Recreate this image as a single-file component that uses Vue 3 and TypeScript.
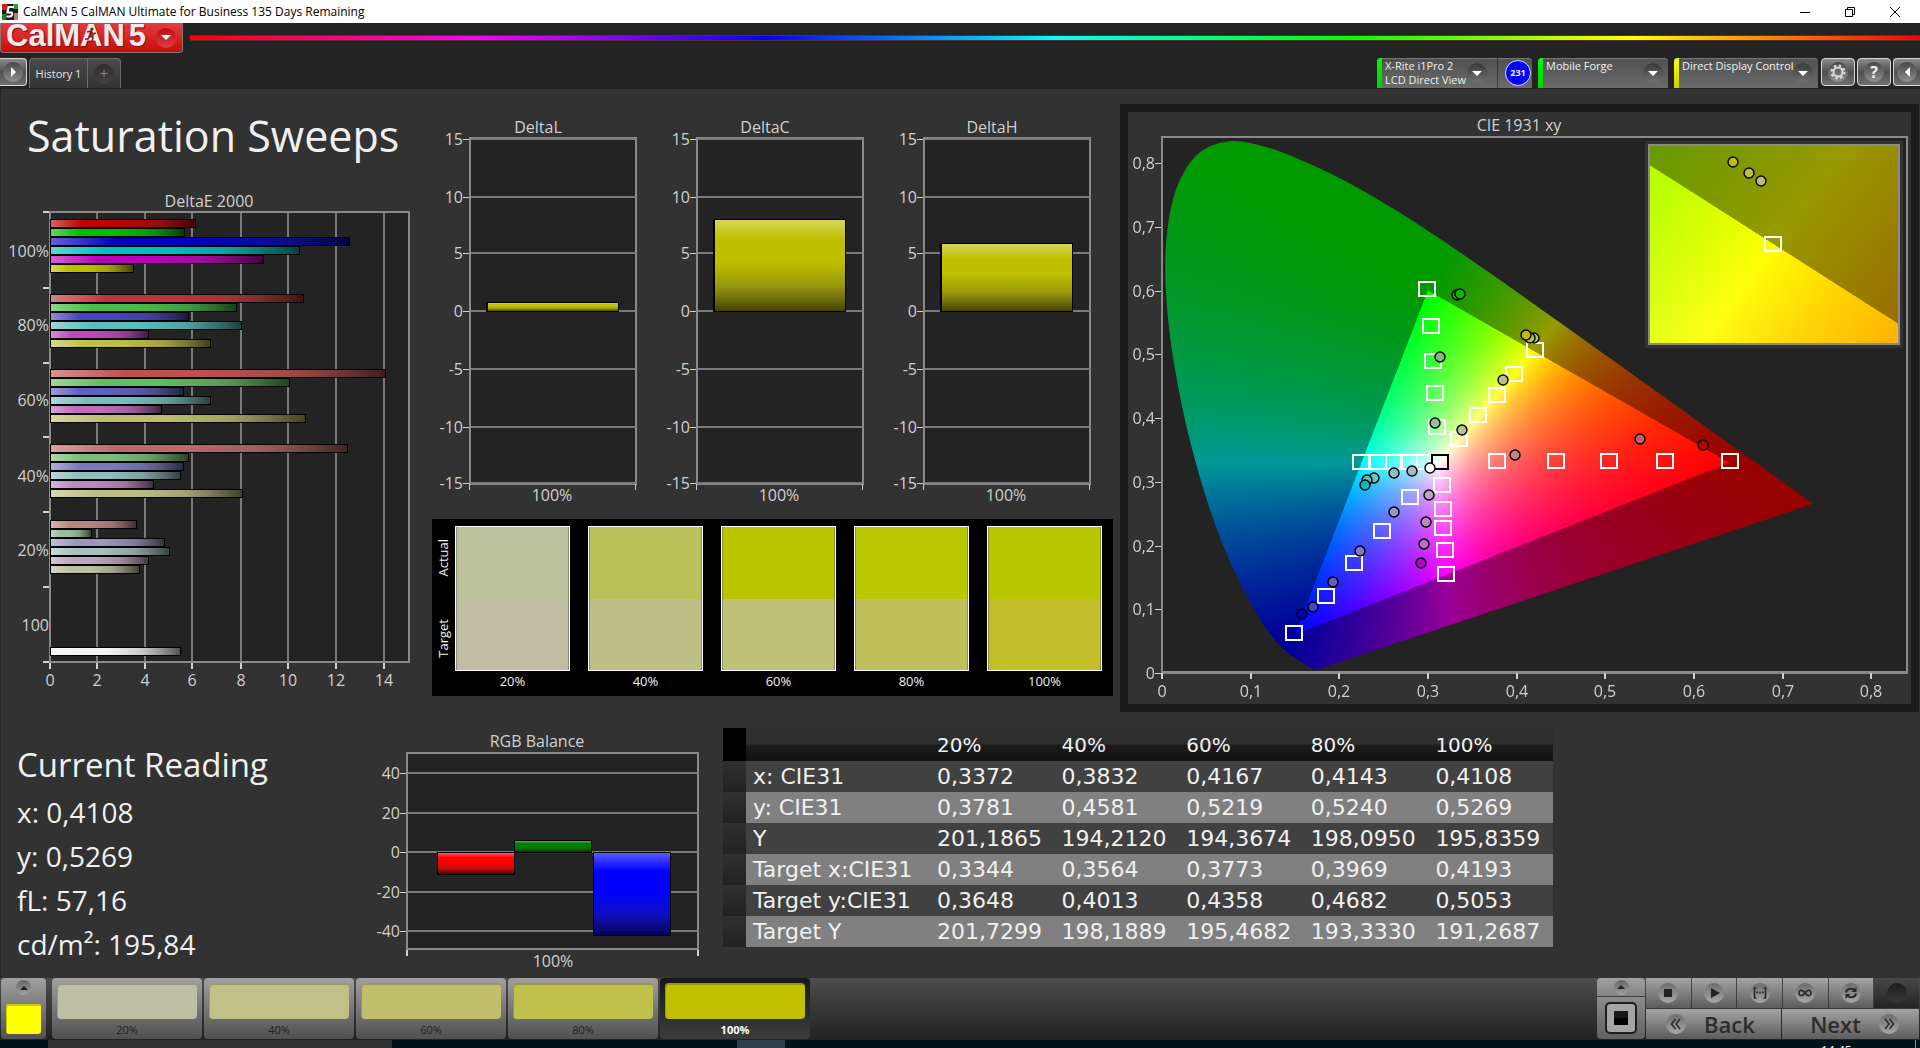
<script setup lang="ts">
import { onMounted, ref } from 'vue'

type Point = [number, number]

interface Bar {
  y: number
  width: number
  color: string
}

/* ---------- DeltaE 2000 ---------- */
const deltaEGroups = [
  { y: 219, widths: [145, 134, 299, 249, 213, 83], colors: ['#be0000', '#00be00', '#0000be', '#00bebe', '#be00be', '#bebe00'] },
  { y: 294, widths: [253, 186, 138, 191, 98, 160], colors: ['#be3636', '#48be48', '#4444be', '#58bebe', '#be48be', '#bebe48'] },
  { y: 369, widths: [335, 239, 133, 160, 111, 255], colors: ['#be5050', '#60be60', '#6060be', '#76bebe', '#be6cbe', '#bebe6a'] },
  { y: 444, widths: [297, 138, 133, 130, 103, 192], colors: ['#be6868', '#7abe7a', '#7a7abe', '#90bebe', '#be86be', '#bebe86'] },
  { y: 520, widths: [86, 41, 114, 119, 98, 89], colors: ['#be8484', '#9abe9a', '#9a96be', '#a6bebe', '#bea4be', '#bebea0'] },
]
const deltaEBars: Bar[] = deltaEGroups.flatMap((g) =>
  g.widths.map((width, i) => ({ y: g.y + i * 9, width, color: g.colors[i] })),
)
deltaEBars.push({ y: 647, width: 130, color: '#f2f2f2' })
const deltaELabels = [
  { text: '100%', y: 257 },
  { text: '80%', y: 331 },
  { text: '60%', y: 406 },
  { text: '40%', y: 482 },
  { text: '20%', y: 556 },
  { text: '100', y: 631 },
]
const deltaETicksY = [212, 288, 363, 437, 512, 587, 662]
const deltaETicksX = [
  { v: 0, x: 50 },
  { v: 2, x: 97 },
  { v: 4, x: 145 },
  { v: 6, x: 192 },
  { v: 8, x: 241 },
  { v: 10, x: 288 },
  { v: 12, x: 336 },
  { v: 14, x: 384 },
]

/* ---------- DeltaL / DeltaC / DeltaH ---------- */
const deltaScale = [
  { v: 15, y: 25 },
  { v: 10, y: 83 },
  { v: 5, y: 139 },
  { v: 0, y: 197 },
  { v: -5, y: 255 },
  { v: -10, y: 313 },
  { v: -15, y: 369 },
]
const deltaCharts = [
  { title: 'DeltaL', height: 9 },
  { title: 'DeltaC', height: 92 },
  { title: 'DeltaH', height: 68 },
]

/* ---------- Actual / Target swatches ---------- */
const comparisons = [
  { label: '20%', actual: '#bbc19a', target: '#bfbea2' },
  { label: '40%', actual: '#bac15b', target: '#c0be87' },
  { label: '60%', actual: '#bbc400', target: '#c0c078' },
  { label: '80%', actual: '#bac600', target: '#bfc05c' },
  { label: '100%', actual: '#b7c600', target: '#c2bf28' },
]

/* ---------- RGB balance ---------- */
const balanceScale = [
  { v: 40, y: 61 },
  { v: 20, y: 101 },
  { v: 0, y: 140 },
  { v: -20, y: 180 },
  { v: -40, y: 219 },
]
const balanceBars = [
  { x: 77, y: 140, height: 22, color: '#ff0000' },
  { x: 154, y: 128, height: 12, color: '#008000' },
  { x: 233, y: 140, height: 83, color: '#0000ff' },
]

/* ---------- Readings ---------- */
const readings = ['x: 0,4108', 'y: 0,5269', 'fL: 57,16', 'cd/m²: 195,84']
const columns = ['20%', '40%', '60%', '80%', '100%']
const rows = [
  { name: 'x: CIE31', values: ['0,3372', '0,3832', '0,4167', '0,4143', '0,4108'] },
  { name: 'y: CIE31', values: ['0,3781', '0,4581', '0,5219', '0,5240', '0,5269'] },
  { name: 'Y', values: ['201,1865', '194,2120', '194,3674', '198,0950', '195,8359'] },
  { name: 'Target x:CIE31', values: ['0,3344', '0,3564', '0,3773', '0,3969', '0,4193'] },
  { name: 'Target y:CIE31', values: ['0,3648', '0,4013', '0,4358', '0,4682', '0,5053'] },
  { name: 'Target Y', values: ['201,7299', '198,1889', '195,4682', '193,3330', '191,2687'] },
]
const steps = [
  { label: '20%', color: '#bfbfa3' },
  { label: '40%', color: '#c0c088' },
  { label: '60%', color: '#c0c06c' },
  { label: '80%', color: '#c0c04c' },
  { label: '100%', color: '#c0c000' },
]

/* ---------- CIE 1931 chart ---------- */
const PLOT_W = 745
const PLOT_H = 536
const axisX = [0, 1, 2, 3, 4, 5, 6, 7, 8].map((n) => ({ text: n ? `0,${n}` : '0', x: Math.round(n * 88.65) }))
const axisY = [0, 1, 2, 3, 4, 5, 6, 7, 8].map((n) => ({ text: n ? `0,${n}` : '0', y: Math.round(PLOT_H - n * 63.75) }))

const targets: Point[] = [
  [264, 152], [268, 189], [270, 224], [272, 256], [274, 290],
  [198, 325], [215, 325], [231, 325], [246, 325], [262, 325],
  [296, 302], [315, 278], [334, 258], [351, 237], [372, 213],
  [334, 324], [393, 324], [446, 324], [502, 324], [567, 324],
  [279, 348], [280, 372], [280, 391], [282, 413], [283, 437],
  [247, 360], [219, 394], [191, 426], [163, 459], [131, 496],
]
const measured: { p: Point; color: string }[] = [
  { p: [294, 158], color: '#1f9a1f' }, { p: [297, 157], color: '#00be00' },
  { p: [277, 220], color: '#7abe7a' }, { p: [272, 286], color: '#9abe9a' },
  { p: [299, 293], color: '#bebea0' }, { p: [340, 243], color: '#bebe86' },
  { p: [371, 201], color: '#bebe6a' }, { p: [367, 201], color: '#bebe48' },
  { p: [363, 198], color: '#bebe00' }, { p: [352, 318], color: '#be8484' },
  { p: [477, 302], color: '#be6060' }, { p: [540, 308], color: '#be0000' },
  { p: [249, 334], color: '#a6bebe' }, { p: [231, 336], color: '#90bebe' },
  { p: [211, 341], color: '#76bebe' }, { p: [204, 343], color: '#58bebe' },
  { p: [202, 348], color: '#00bebe' }, { p: [267, 331], color: '#ffffff' },
  { p: [266, 358], color: '#bea4be' }, { p: [263, 385], color: '#be86be' },
  { p: [261, 407], color: '#be6cbe' }, { p: [258, 426], color: '#be00be' },
  { p: [231, 375], color: '#9a96be' }, { p: [197, 414], color: '#7a7abe' },
  { p: [170, 445], color: '#6060be' }, { p: [150, 470], color: '#4444be' },
  { p: [139, 477], color: '#0000be' },
]
const insetMeasured: { p: Point; color: string }[] = [
  { p: [571, 25], color: '#bebe00' },
  { p: [587, 36], color: '#bebe48' },
  { p: [599, 44], color: '#bebe6a' },
]

const locus: Point[] = [
  [0.1741, 0.005], [0.1714, 0.0051], [0.1689, 0.0069], [0.1644, 0.0109], [0.1566, 0.0177],
  [0.144, 0.0297], [0.1355, 0.0399], [0.1241, 0.0578], [0.1096, 0.0868], [0.0913, 0.1327],
  [0.0687, 0.2007], [0.0454, 0.295], [0.0235, 0.4127], [0.0082, 0.5384], [0.0039, 0.6548],
  [0.0139, 0.7502], [0.0389, 0.812], [0.0743, 0.8338], [0.1142, 0.8262], [0.1547, 0.8059],
  [0.1929, 0.7816], [0.2296, 0.7543], [0.2658, 0.7243], [0.3016, 0.6923], [0.3373, 0.6589],
  [0.3731, 0.6245], [0.4087, 0.5896], [0.4441, 0.5547], [0.4788, 0.5202], [0.5125, 0.4866],
  [0.5448, 0.4544], [0.5752, 0.4242], [0.6029, 0.3965], [0.627, 0.3725], [0.6482, 0.3514],
  [0.6658, 0.334], [0.6915, 0.3083], [0.719, 0.2809], [0.7347, 0.2653],
]

/** Displayable colour of a chromaticity; dimmed outside the Rec. 709 triangle. */
function chromaticity(x: number, y: number): [number, number, number] {
  const X = x / y
  const Z = (1 - x - y) / y
  const lin = [
    3.2406 * X - 1.5372 - 0.4986 * Z,
    -0.9689 * X + 1.8758 + 0.0415 * Z,
    0.0557 * X - 0.204 + 1.057 * Z,
  ]
  const inside = lin.every((c) => c >= 0)
  const top = Math.max(...lin)
  const gain = inside ? 255 : 153
  const [r, g, b] = lin.map((c) => (Math.max(c, 0) / top) * gain)
  return [r, g, b]
}

function paint(canvas: HTMLCanvasElement, x0: number, x1: number, y0: number, y1: number, outline: boolean) {
  const w = canvas.width
  const h = canvas.height
  const buffer = document.createElement('canvas')
  buffer.width = w * 2
  buffer.height = h * 2
  const bctx = buffer.getContext('2d')!
  const img = bctx.createImageData(w * 2, h * 2)
  for (let j = 0; j < h * 2; j++) {
    const y = Math.max(y1 - ((j + 0.5) / (h * 2)) * (y1 - y0), 0.0005)
    for (let i = 0; i < w * 2; i++) {
      const x = x0 + ((i + 0.5) / (w * 2)) * (x1 - x0)
      const [r, g, b] = chromaticity(x, y)
      const k = (j * w * 2 + i) * 4
      img.data[k] = r
      img.data[k + 1] = g
      img.data[k + 2] = b
      img.data[k + 3] = 255
    }
  }
  bctx.putImageData(img, 0, 0)
  const ctx = canvas.getContext('2d')!
  if (outline) {
    const pts = locus.map(([x, y]): Point => [((x - x0) / (x1 - x0)) * w, ((y1 - y) / (y1 - y0)) * h])
    ctx.beginPath()
    ctx.moveTo(pts[0][0], pts[0][1])
    for (let i = 0; i < pts.length - 1; i++) {
      const a = pts[Math.max(i - 1, 0)]
      const b = pts[i]
      const c = pts[i + 1]
      const d = pts[Math.min(i + 2, pts.length - 1)]
      ctx.bezierCurveTo(
        b[0] + (c[0] - a[0]) / 6, b[1] + (c[1] - a[1]) / 6,
        c[0] - (d[0] - b[0]) / 6, c[1] - (d[1] - b[1]) / 6,
        c[0], c[1],
      )
    }
    ctx.closePath()
    ctx.clip()
  }
  ctx.imageSmoothingQuality = 'high'
  ctx.drawImage(buffer, 0, 0, w, h)
}

const mainCanvas = ref<HTMLCanvasElement | null>(null)
const insetCanvas = ref<HTMLCanvasElement | null>(null)

onMounted(() => {
  if (mainCanvas.value) paint(mainCanvas.value, 0, 0.8404, 0, 0.8408, true)
  if (insetCanvas.value) paint(insetCanvas.value, 0.3926, 0.446, 0.4788, 0.5317, false)
})
</script>

<template>
  <div class="app">
    <header class="titlebar">
      <svg class="app-icon" viewBox="0 0 16 16" aria-hidden="true">
        <rect width="16" height="16" fill="#1c1c1c" />
        <rect width="5" height="6" fill="#d02020" />
        <rect x="11" width="5" height="5" fill="#30a030" />
        <rect y="10" width="4" height="6" fill="#208020" />
        <rect x="12" y="9" width="4" height="7" fill="#b08080" />
        <path d="M12 3H6.500L5.500 8.500H9.500Q10.500 9 10 10.800Q9.500 12.300 8 12.500H4.500" fill="none" stroke="#fff" stroke-width="2.200" />
      </svg>
      <span class="app-name">CalMAN 5 CalMAN Ultimate for Business 135 Days Remaining</span>
      <div class="window-buttons">
        <button type="button" aria-label="Minimize"><svg viewBox="0 0 12 12"><path d="M1 6.500H11" /></svg></button>
        <button type="button" aria-label="Restore"><svg viewBox="0 0 12 12"><path d="M1.500 3.500H8.500V10.500H1.500ZM3.500 3.500V1.500H10.500V8.500H8.500" /></svg></button>
        <button type="button" aria-label="Close"><svg viewBox="0 0 12 12"><path d="M1 1L11 11M11 1L1 11" /></svg></button>
      </div>
    </header>

    <div class="brandbar">
      <button type="button" class="brand">
        <span class="brand-text">CalMAN</span>
        <span class="brand-text">5</span>
        <svg class="runner" viewBox="0 0 14 16" aria-hidden="true">
          <circle cx="8" cy="2" r="1.600" fill="#7c2020" />
          <path d="M3 5L7 4L9 7L12 6M7 5L6 9L9 11L8 14M6 9L4 12L1 12" fill="none" stroke="#7c2020" stroke-width="1.500" />
        </svg>
        <span class="brand-drop"><i class="tri down"></i></span>
      </button>
      <div class="rainbow"></div>
    </div>

    <nav class="tabs">
      <button type="button" class="square play" aria-label="Expand"><span class="disc"><i class="tri right"></i></span></button>
      <button type="button" class="tab history">History 1</button>
      <button type="button" class="tab add" aria-label="Add history"><span class="disc dark">+</span></button>
      <div class="spacer"></div>
      <div class="device meter">
        <i class="status green"></i>
        <span class="device-name">X-Rite i1Pro 2<br />LCD Direct View</span>
        <button type="button" class="disc dim" aria-label="Meter options"><i class="tri down"></i></button>
        <span class="badge-cell"><b class="badge">231</b></span>
      </div>
      <div class="device source">
        <i class="status green"></i>
        <span class="device-name">Mobile Forge</span>
        <button type="button" class="disc dim" aria-label="Source options"><i class="tri down"></i></button>
      </div>
      <div class="device display">
        <i class="status yellow"></i>
        <span class="device-name">Direct Display Control</span>
        <button type="button" class="disc dim" aria-label="Display options"><i class="tri down"></i></button>
      </div>
      <button type="button" class="square" aria-label="Settings">
        <span class="disc">
          <svg viewBox="0 0 16 16" width="16" height="16">
            <circle cx="8" cy="8" r="4.500" fill="none" stroke="#ddd" stroke-width="2" />
            <circle cx="8" cy="8" r="6.500" fill="none" stroke="#ddd" stroke-width="2" stroke-dasharray="2.550 2.550" />
          </svg>
        </span>
      </button>
      <button type="button" class="square help" aria-label="Help"><span class="disc">?</span></button>
      <button type="button" class="square edge" aria-label="Collapse"><span class="disc"><i class="tri left"></i></span></button>
    </nav>

    <main class="workspace">
      <div class="upper">
        <section>
          <h1>Saturation Sweeps</h1>
          <svg class="chart" viewBox="0 190 432 520">
            <defs>
              <linearGradient id="gloss-h">
                <stop offset="0" stop-color="#fff" stop-opacity=".38" />
                <stop offset=".22" stop-color="#fff" stop-opacity="0" />
                <stop offset=".45" stop-color="#333" stop-opacity="0" />
                <stop offset=".7" stop-color="#333" stop-opacity=".2" />
                <stop offset="1" stop-color="#000" stop-opacity=".66" />
              </linearGradient>
              <linearGradient id="gloss-v" x2="0" y2="1">
                <stop offset="0" stop-color="#fff" stop-opacity=".35" />
                <stop offset=".22" stop-color="#fff" stop-opacity="0" />
                <stop offset=".45" stop-color="#333" stop-opacity="0" />
                <stop offset=".7" stop-color="#333" stop-opacity=".25" />
                <stop offset="1" stop-color="#000" stop-opacity=".66" />
              </linearGradient>
            </defs>
            <text x="209" y="207" class="mid">DeltaE 2000</text>
            <rect x="50" y="212" width="359" height="450" class="plot" />
            <g v-for="t in deltaETicksX" :key="t.v">
              <rect v-if="t.v" :x="t.x - 1" y="213" width="2" height="448" class="grid" />
              <rect :x="t.x - 1" y="663" width="2" height="6" class="tick" />
              <text :x="t.x" y="686" class="mid">{{ t.v }}</text>
            </g>
            <rect v-for="y in deltaETicksY" :key="y" x="43" :y="y - 1" width="6" height="2" class="tick" />
            <text v-for="l in deltaELabels" :key="l.y" x="49" :y="l.y" class="end">{{ l.text }}</text>
            <g v-for="b in deltaEBars" :key="b.y">
              <rect x="50" :y="b.y" :width="b.width + 1" height="9" fill="#000" />
              <rect x="51" :y="b.y + 1" :width="b.width - 1" height="7" :fill="b.color" />
              <rect x="51" :y="b.y + 1" :width="b.width - 1" height="7" fill="url(#gloss-h)" />
            </g>
          </svg>
        </section>

        <section class="middle">
          <div class="delta-row">
            <svg v-for="c in deltaCharts" :key="c.title" class="chart" viewBox="0 0 227 395">
              <text x="106" y="19" class="mid">{{ c.title }}</text>
              <rect x="38" y="24" width="166" height="346" class="plot" />
              <g v-for="s in deltaScale" :key="s.v">
                <rect x="39" :y="s.y - 1" width="165" height="2" class="grid" />
                <rect x="31" :y="s.y" width="6" height="1" class="tick" />
                <text x="31" :y="s.y + 6" class="end">{{ s.v }}</text>
              </g>
              <rect x="37" y="370" width="1" height="6" class="tick" />
              <rect x="203" y="370" width="1" height="6" class="tick" />
              <rect x="54" :y="197 - c.height" width="133" :height="c.height + 1" fill="#000" />
              <rect x="56" :y="198 - c.height" width="130" :height="c.height - 1" fill="#bfbf00" />
              <rect x="56" :y="198 - c.height" width="130" :height="c.height - 1" fill="url(#gloss-v)" />
              <text x="120" y="387" class="mid">100%</text>
            </svg>
          </div>
          <div class="compare">
            <div class="compare-side"><span>Actual</span><span>Target</span></div>
            <figure v-for="c in comparisons" :key="c.label">
              <div class="pair">
                <i :style="{ background: c.actual }"></i>
                <i :style="{ background: c.target }"></i>
              </div>
              <figcaption>{{ c.label }}</figcaption>
            </figure>
          </div>
        </section>

        <section class="cie">
          <svg class="chart" viewBox="0 0 783 592">
            <text x="391" y="19" class="mid">CIE 1931 xy</text>
            <g transform="translate(34 25)">
              <rect width="745" height="536" class="plot" />
              <foreignObject x="0" y="0" :width="PLOT_W" :height="PLOT_H">
                <canvas ref="mainCanvas" :width="PLOT_W" :height="PLOT_H"></canvas>
              </foreignObject>
              <rect width="745" height="535" class="frame" />
              <g v-for="a in axisX" :key="'x' + a.text">
                <rect :x="a.x - 1" y="536" width="2" height="6" class="tick" />
                <text :x="a.x" y="560" class="mid">{{ a.text }}</text>
              </g>
              <g v-for="a in axisY" :key="'y' + a.text">
                <rect x="-7" :y="a.y" width="6" height="1" class="tick" />
                <text x="-7" :y="a.y + 6" class="end">{{ a.text }}</text>
              </g>
              <g transform="translate(1 0)">
                <rect v-for="([x, y], i) in targets" :key="i" :x="x - 8" :y="y - 7" width="16" height="14" class="target" />
                <rect x="269" y="318" width="16" height="14" class="target black" />
                <circle v-for="(m, i) in measured" :key="i" :cx="m.p[0]" :cy="m.p[1]" r="5" :fill="m.color" class="dot" />
              </g>

              <rect x="483" y="4" width="258" height="207" fill="#323232" />
              <foreignObject x="487" y="8" width="250" height="199">
                <canvas ref="insetCanvas" width="250" height="199"></canvas>
              </foreignObject>
              <rect x="487" y="8" width="250" height="199" class="frame" />
              <rect x="603" y="100" width="16" height="14" class="target" />
              <circle v-for="(m, i) in insetMeasured" :key="i" :cx="m.p[0]" :cy="m.p[1]" r="5" :fill="m.color" class="dot" />
            </g>
          </svg>
        </section>
      </div>

      <div class="lower">
        <section class="reading">
          <h2>Current Reading</h2>
          <p v-for="r in readings" :key="r">{{ r }}</p>
        </section>

        <svg class="chart" viewBox="0 0 363 266">
          <text x="177" y="35" class="mid">RGB Balance</text>
          <rect x="47" y="41" width="291" height="196" class="plot" />
          <g v-for="s in balanceScale" :key="s.v">
            <rect x="48" :y="s.y - 1" width="290" height="2" class="grid" />
            <rect x="40" :y="s.y" width="6" height="1" class="tick" />
            <text x="40" :y="s.y + 6" class="end">{{ s.v }}</text>
          </g>
          <rect x="46" y="238" width="2" height="6" class="tick" />
          <rect x="337" y="238" width="2" height="6" class="tick" />
          <g v-for="b in balanceBars" :key="b.x">
            <rect :x="b.x" :y="b.y" width="78" :height="b.height + 1" fill="#000" />
            <rect :x="b.x + 1" :y="b.y + 1" width="76" :height="b.height - 1" :fill="b.color" />
            <rect :x="b.x + 1" :y="b.y + 1" width="76" :height="b.height - 1" fill="url(#gloss-v)" />
          </g>
          <text x="193" y="255" class="mid">100%</text>
        </svg>

        <div>
          <table>
            <thead>
              <tr>
                <td class="handle"></td>
                <td class="name"></td>
                <th v-for="c in columns" :key="c" scope="col">{{ c }}</th>
              </tr>
            </thead>
            <tbody>
              <tr v-for="r in rows" :key="r.name">
                <td class="handle"></td>
                <th scope="row" class="name">{{ r.name }}</th>
                <td v-for="(v, i) in r.values" :key="i">{{ v }}</td>
              </tr>
            </tbody>
          </table>
        </div>
      </div>
    </main>

    <footer class="controls">
      <button type="button" class="palette" aria-label="Current pattern">
        <span class="mini-disc"><i class="tri up"></i></span>
        <i class="current"></i>
      </button>
      <div class="steps">
        <button v-for="s in steps" :key="s.label" type="button" class="step" :class="{ active: s.label === '100%' }">
          <i :style="{ background: s.color }"></i>
          <span>{{ s.label }}</span>
        </button>
      </div>
      <div class="spacer"></div>
      <div class="pattern">
        <button type="button" class="pattern-up" aria-label="Show patterns"><span class="mini-disc"><i class="tri up"></i></span></button>
        <button type="button" class="pattern-window" aria-label="Window size"><i></i></button>
      </div>
      <div class="transport">
        <div class="transport-row">
          <button type="button" aria-label="Stop"><span class="knob"><svg viewBox="0 0 20 20"><rect x="6" y="6" width="8" height="8" fill="#222" /></svg></span></button>
          <button type="button" aria-label="Play"><span class="knob"><svg viewBox="0 0 20 20"><path d="M7 5L16 10L7 15Z" fill="#222" /></svg></span></button>
          <button type="button" aria-label="Read series"><span class="knob"><svg viewBox="0 0 20 20"><path d="M6.500 5H4.500V15H6.500M13.500 5H15.500V15H13.500" fill="none" stroke="#2a2a2a" stroke-width="1.600" /><path d="M6.500 9.500H8M9.200 9.500H10.800M12 9.500H13.500" stroke="#2a2a2a" stroke-width="1.800" /></svg></span></button>
          <button type="button" aria-label="Continuous"><span class="knob"><svg viewBox="0 0 20 20"><path d="M10 10C8 7 4 6.200 4 10S8 13 10 10S16 6.200 16 10S12 13 10 10Z" fill="none" stroke="#2a2a2a" stroke-width="1.700" /></svg></span></button>
          <button type="button" aria-label="Repeat"><span class="knob"><svg viewBox="0 0 20 20"><path d="M5 9.500C5.500 6 10 4.500 13.500 7M15 10.500C14.500 14 10 15.500 6.500 13" fill="none" stroke="#2a2a2a" stroke-width="2" /><path d="M15.500 4V9H10.500ZM4.500 16V11H9.500Z" fill="#2a2a2a" /></svg></span></button>
          <button type="button" class="off" aria-label="Record"><span class="knob"></span></button>
        </div>
        <div class="transport-row wide">
          <button type="button" class="back"><span class="knob"><svg viewBox="0 0 20 20"><path d="M9.500 5L5.500 10L9.500 15M14 5L10 10L14 15" fill="none" stroke="#2a2a2a" stroke-width="1.500" /></svg></span>Back</button>
          <button type="button" class="next">Next<span class="knob"><svg viewBox="0 0 20 20"><path d="M6 5L10 10L6 15M10.500 5L14.500 10L10.500 15" fill="none" stroke="#2a2a2a" stroke-width="1.500" /></svg></span></button>
        </div>
      </div>
    </footer>
    <div class="taskbar"><i class="task-a"></i><i class="task-b"></i><i class="task-c"></i><span class="clock">14:45</span></div>
  </div>
</template>

<style>
body {
  margin: 0;
  background: #232323;
}
</style>

<style scoped>
.app {
  display: flex;
  flex-direction: column;
  min-height: 100vh;
  background: #232323;
  color: #f0f0f0;
  font-family: "Open Sans", "Noto Sans", sans-serif;
  overflow: hidden;
}
button {
  font: inherit;
  color: inherit;
  border: 0;
  padding: 0;
  margin: 0;
  background: none;
  box-sizing: border-box;
}
h1,
h2,
p,
figure {
  margin: 0;
  font-weight: 400;
}
i {
  display: block;
}
.spacer {
  flex: 1;
}

/* window title */
.titlebar {
  display: flex;
  align-items: center;
  height: 23px;
  background: #fff;
  color: #000;
  font-size: 12px;
}
.app-icon {
  width: 16px;
  height: 16px;
  margin: 0 5px 0 2px;
}
.app-name {
  flex: 1;
  line-height: 22px;
}
.window-buttons {
  display: flex;
  padding-right: 3px;
}
.window-buttons button {
  width: 45px;
  height: 22px;
}
.window-buttons svg {
  display: block;
  width: 12px;
  height: 12px;
  margin: 0 auto;
  fill: none;
  stroke: #000;
}

/* brand */
.brandbar {
  display: flex;
  align-items: flex-start;
  height: 35px;
}
.brand {
  position: relative;
  display: flex;
  align-items: center;
  gap: 4px;
  width: 183px;
  height: 30px;
  padding-left: 5px;
  border: 1px solid #8a7474;
  border-top: 0;
  border-radius: 0 0 4px 4px;
  background: linear-gradient(#e23c3c, #d82424 50%, #c80c0c);
}
.brand-text {
  font: 700 31px/26px "Liberation Sans", Arial, sans-serif;
  color: #ececec;
  text-shadow: 1px 1px 1px #7a1010;
  margin-top: -4px;
}
.runner {
  position: absolute;
  left: 83px;
  top: 4px;
  width: 14px;
  height: 16px;
}
.brand-drop {
  display: flex;
  align-items: center;
  justify-content: center;
  width: 20px;
  height: 20px;
  margin: 0 6px 0 auto;
  border-radius: 50%;
  background: linear-gradient(#b80c14, #e04040);
}
.rainbow {
  flex: 1;
  height: 4px;
  margin: 12px 0 0 7px;
  border: 1px solid #503030;
  border-width: 1px 0;
  background: linear-gradient(90deg, #f00, #f0f, #00f, #0ff, #0f0, #ff0, #f00);
}
.tri {
  width: 0;
  height: 0;
  border: 5px solid transparent;
}
.tri.down {
  border-top-color: #fff;
  border-bottom: 0;
}
.tri.up {
  border: 4px solid transparent;
  border-bottom-color: #222;
  border-top: 0;
}
.tri.right {
  border-left-color: #fff;
  border-right: 0;
}
.tri.left {
  border-right-color: #fff;
  border-left: 0;
}

/* tabs */
.tabs {
  display: flex;
  align-items: flex-start;
  height: 31px;
  font-size: 11px;
}
.square {
  flex: none;
  display: flex;
  align-items: center;
  justify-content: center;
  width: 34px;
  height: 28px;
  margin-left: 2px;
  border: 1px solid #d8d8d8;
  border-radius: 4px;
  background: linear-gradient(#8a8a8a, #505050 50%, #707070);
}
.square.play {
  width: 27px;
  margin: 0 2px 0 0;
  border-left: 0;
  border-radius: 0 4px 4px 0;
}
.square.edge {
  width: 27px;
  border-right: 0;
  border-radius: 4px 0 0 4px;
}
.help {
  font-weight: 700;
  font-size: 16px;
}
.disc {
  flex: none;
  display: flex;
  align-items: center;
  justify-content: center;
  width: 20px;
  height: 20px;
  border-radius: 50%;
  background: linear-gradient(#484848, #909090);
}
.disc.dark {
  background: linear-gradient(#2c2c2c, #444);
  color: #888;
  font-size: 14px;
}
.disc.dim {
  background: linear-gradient(#3a3a3a, #707070);
}
.tab {
  height: 30px;
  border: 1px solid #6c6c6c;
  border-bottom: 0;
  background: linear-gradient(#4a4a4a, #333);
  color: #e4e4e4;
}
.history {
  width: 59px;
  font-size: 11px;
  border-radius: 4px 0 0 0;
}
.add {
  display: flex;
  align-items: center;
  justify-content: center;
  width: 33px;
  border-left: 0;
  border-radius: 0 4px 0 0;
}
.device {
  flex: none;
  display: flex;
  height: 30px;
  margin-right: 6px;
  border-radius: 4px 4px 0 0;
  background: linear-gradient(#505050, #6a6a6a);
  box-shadow: inset 0 1px #777;
  overflow: hidden;
}
.device .disc {
  margin: 5px 5px 0 0;
}
.device-name {
  flex: 1;
  min-width: 0;
  padding: 1px 0 0 3px;
  line-height: 14px;
  white-space: nowrap;
}
.status {
  flex: none;
  width: 5px;
}
.status.green {
  background: linear-gradient(#00f800, #00d000);
}
.status.yellow {
  background: linear-gradient(#ffff00, #d0d000);
}
.meter {
  width: 155px;
}
.source {
  width: 130px;
}
.display {
  width: 144px;
  margin-right: 1px;
}
.badge-cell {
  flex: none;
  display: flex;
  align-items: center;
  width: 35px;
  box-sizing: border-box;
  padding-left: 7px;
  border-left: 1px solid #3a3a3a;
}
.device.meter .disc {
  margin-right: 10px;
}
.badge {
  box-sizing: border-box;
  width: 26px;
  height: 26px;
  border: 1px solid #dcdcff;
  border-radius: 50%;
  background: #00f;
  font-size: 9px;
  line-height: 24px;
  text-align: center;
}

/* workspace */
.workspace {
  flex: 1;
  background: #323232;
  box-shadow: inset 1px 0 #232323;
}
.upper {
  display: grid;
  grid-template-columns: 432fr 688fr 800fr;
  align-items: start;
}
.lower {
  display: grid;
  grid-template-columns: 360fr 363fr 830fr 367fr;
  align-items: start;
}
.chart {
  display: block;
  width: 100%;
  height: auto;
  font-size: 16px;
  fill: #d0d0d0;
}
.chart rect {
  shape-rendering: crispEdges;
}
.chart canvas {
  display: block;
}
.mid {
  text-anchor: middle;
}
.end {
  text-anchor: end;
}
.plot {
  fill: #232323;
  stroke: #8a8a8a;
  stroke-width: 2px;
}
.frame {
  fill: none;
  stroke: #8a8a8a;
  stroke-width: 2px;
}
.grid {
  fill: #7a7a7a;
}
.tick {
  fill: #d0d0d0;
}
.target {
  fill: none;
  stroke: #fff;
  stroke-width: 2px;
}
.target.black {
  stroke: #000;
}
.dot {
  stroke: #000;
  stroke-width: 1.4px;
}
h1 {
  padding: 22px 0 29px 27px;
  font-size: 43px;
  line-height: 50px;
  white-space: nowrap;
}
.middle {
  padding-right: 7px;
}
.delta-row {
  display: grid;
  grid-template-columns: repeat(3, 1fr);
  padding-top: 25px;
}
.compare {
  display: flex;
  gap: 18px;
  margin-top: 10px;
  padding: 7px 11px 7px 2px;
  background: #000;
}
.compare-side {
  display: flex;
  flex-direction: column;
  justify-content: center;
  gap: 42px;
  height: 145px;
  width: 20px;
  margin-right: -17px;
  font-size: 13px;
  line-height: 18px;
}
.compare-side span {
  writing-mode: vertical-rl;
  transform: rotate(180deg);
}
.compare figure {
  flex: 1;
}
.pair {
  border: 1px solid #fff;
}
.pair i {
  height: 72px;
  box-shadow: inset 1px 0 rgba(90, 90, 90, 0.5), inset -1px 0 rgba(90, 90, 90, 0.5);
}
.pair i + i {
  height: 71px;
}
.compare figcaption {
  padding-top: 3px;
  font-size: 13px;
  line-height: 15px;
  text-align: center;
}
.cie {
  margin: 15px 1px 0 0;
  border: 8px solid #1b1b1b;
}

.reading {
  padding: 28px 0 0 17px;
  white-space: nowrap;
}
.reading h2 {
  font-size: 33px;
  line-height: 50px;
}
.reading p {
  font-size: 28px;
  line-height: 44px;
}
table {
  width: 100%;
  margin-top: 16px;
  border-collapse: collapse;
  table-layout: fixed;
  font-family: "DejaVu Sans", Verdana, sans-serif;
  font-size: 22px;
}
td,
th {
  height: 31px;
  padding: 0 0 0 7px;
  font-weight: 400;
  line-height: 30px;
  text-align: left;
  white-space: nowrap;
}
thead td,
thead th {
  height: 33px;
  font-size: 20px;
  background: linear-gradient(#2e2e2e 48%, #1c1c1c 52%, #121212);
}
tbody tr {
  background: #414141;
}
tbody tr:nth-child(even) {
  background: #808080;
}
.handle {
  width: 23px;
  padding: 0;
}
td.handle {
  background: linear-gradient(#303030, #222);
}
thead td.handle {
  background: #000;
}
.name {
  width: 177px;
}

/* bottom controls */
.controls {
  display: flex;
  height: 62px;
  background: linear-gradient(#4c4c4c, #222);
}
.palette {
  display: flex;
  flex-direction: column;
  align-items: center;
  width: 45px;
  height: 61px;
  margin: 0 6px 0 1px;
  padding-top: 2px;
  border-radius: 4px;
  background: linear-gradient(#a0a0a0, #505050);
}
.mini-disc {
  display: flex;
  align-items: center;
  justify-content: center;
  width: 15px;
  height: 15px;
  border-radius: 50%;
  background: linear-gradient(#666, #a0a0a0);
}
.current {
  width: 35px;
  height: 30px;
  margin-top: 9px;
  border-radius: 3px;
  background: #ff0;
  box-shadow: inset 1px 2px #c8c800;
}
.steps {
  display: flex;
  gap: 2px;
}
.step {
  width: 150px;
  height: 61px;
  padding: 5px;
  border-radius: 4px;
  background: linear-gradient(#a0a0a0, #505050);
  color: #222;
  font-size: 11px;
  line-height: 15px;
}
.step i {
  height: 36px;
  margin-bottom: 3px;
  border-radius: 4px;
  box-shadow: inset 1px 2px rgba(0, 0, 0, 0.2);
}
.step span {
  display: block;
}
.step.active {
  background: linear-gradient(#181818, #3c3c3c);
  color: #fff;
  font-weight: 700;
}
.pattern {
  width: 48px;
  margin-right: 1px;
}
.pattern button {
  display: flex;
  align-items: center;
  justify-content: center;
  width: 48px;
}
.pattern .pattern-up {
  height: 18px;
  margin-bottom: 1px;
  border-radius: 4px 4px 0 0;
  background: linear-gradient(#a0a0a0, #848484);
}
.pattern .pattern-window {
  height: 42px;
  border-radius: 0 0 4px 4px;
  background: linear-gradient(#8c8c8c, #606060);
}
.pattern-window i {
  width: 14px;
  height: 14px;
  border: 7px solid #a4a4a4;
  outline: 2px solid #1e1e1e;
  border-radius: 3px;
  background: linear-gradient(#161616 50%, #000 50%);
}
.transport {
  display: flex;
  flex-direction: column;
  gap: 1px;
  width: 273px;
  margin-right: 1px;
}
.transport-row {
  display: flex;
  gap: 1px;
}
.transport-row button {
  flex: 1;
  display: flex;
  align-items: center;
  justify-content: center;
  height: 30px;
  background: linear-gradient(#a4a4a4, #5c5c5c);
}
.transport-row .off {
  background: linear-gradient(#484848, #242424);
}
.knob {
  width: 20px;
  height: 20px;
  border-radius: 50%;
  background: linear-gradient(#6c6c6c, #a8a8a8);
}
.knob svg {
  display: block;
}
.off .knob {
  background: linear-gradient(#1c1c1c, #383838);
}
.wide button {
  gap: 18px;
  color: #2c2c2c;
  font-size: 22px;
  font-weight: 600;
  line-height: 28px;
}
.wide .back {
  padding-right: 6px;
}
.wide .next {
  padding-left: 8px;
}

/* strip of the desktop taskbar */
.taskbar {
  display: flex;
  height: 8px;
  background: #03121b;
  overflow: hidden;
}
.task-a {
  width: 344px;
  margin-left: 48px;
  background: #323232;
}
.task-b {
  width: 48px;
  margin-left: 345px;
  background: #31404c;
}
.task-c {
  flex: 1;
}
.clock {
  width: 95px;
  box-sizing: border-box;
  margin-right: 4px;
  border-right: 1px solid #8a9298;
  padding-top: 2px;
  font-size: 12px;
  color: #fff;
}
</style>
